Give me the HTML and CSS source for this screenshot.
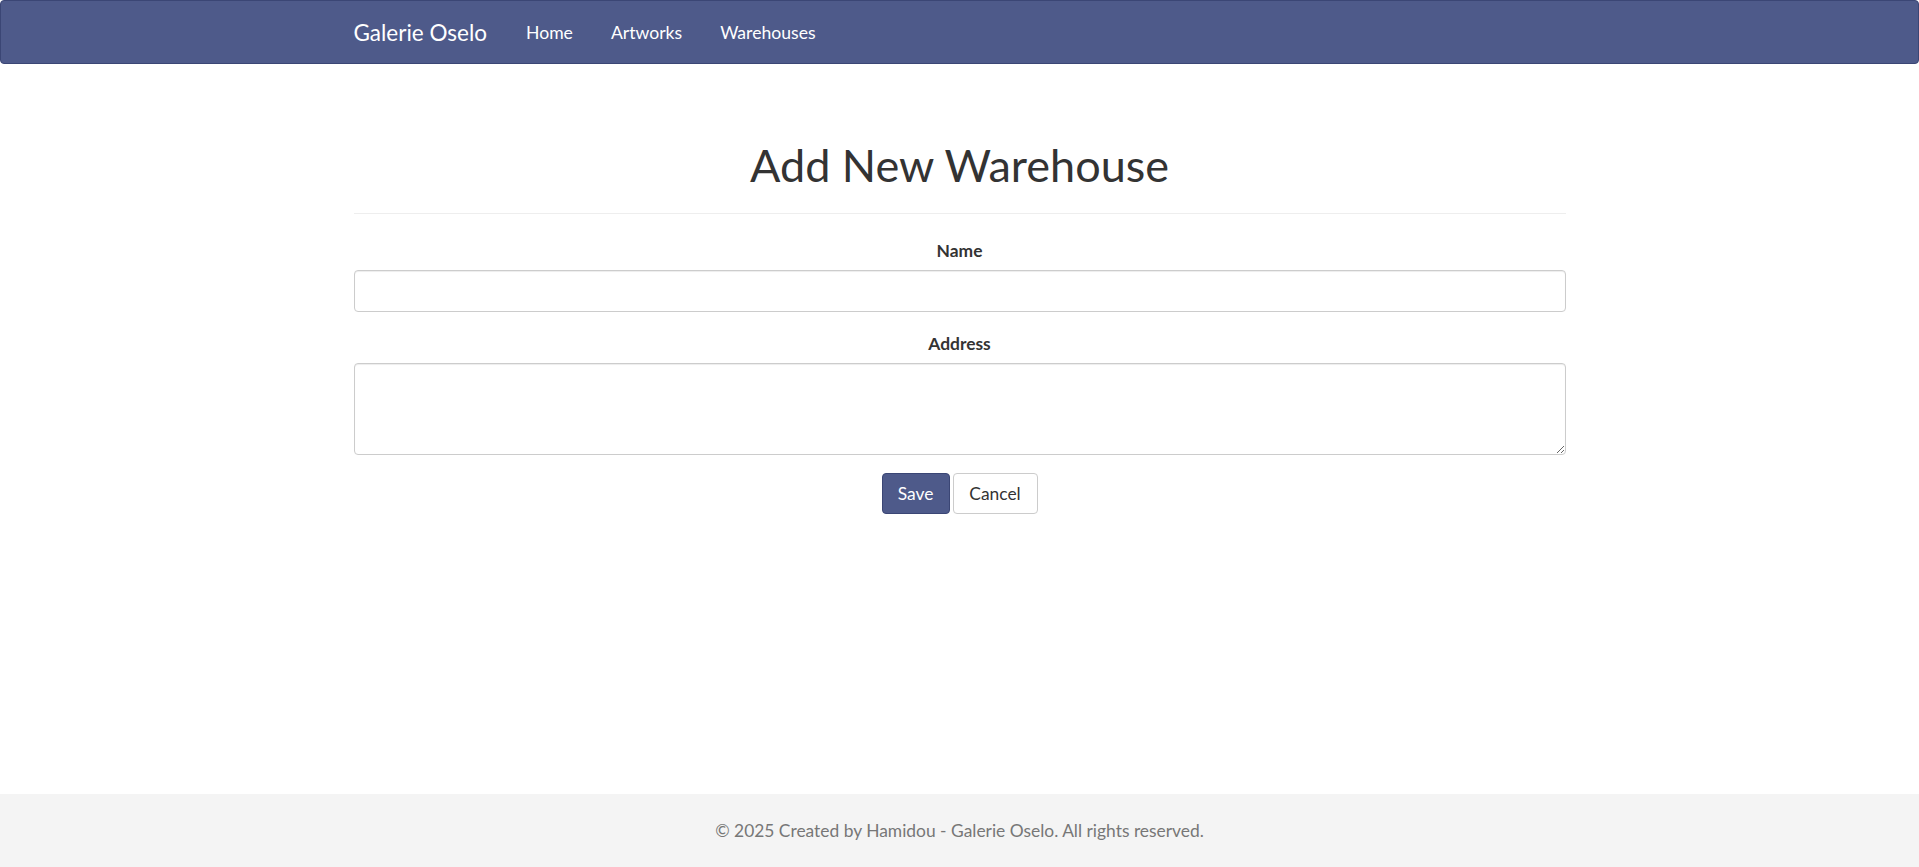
FILE: index.html
```html
<!DOCTYPE html>
<html lang="en">
<head>
<meta charset="utf-8">
<title>Add New Warehouse - Galerie Oselo</title>
<link rel="stylesheet" href="styles.css">
</head>
<body>
<nav class="navbar">
  <div class="container nav-inner">
    <a class="brand" href="#">Galerie Oselo</a>
    <ul class="nav-links">
      <li><a href="#">Home</a></li>
      <li><a href="#">Artworks</a></li>
      <li><a href="#">Warehouses</a></li>
    </ul>
  </div>
</nav>
<main class="container main">
  <div class="page-header">
    <h1>Add New Warehouse</h1>
  </div>
  <form class="form">
    <div class="form-group">
      <label for="name">Name</label>
      <input id="name" type="text" class="form-control">
    </div>
    <div class="form-group">
      <label for="address">Address</label>
      <textarea id="address" class="form-control textarea"></textarea>
    </div>
    <div class="actions">
      <button type="submit" class="btn btn-primary">Save</button>
      <a href="#" class="btn btn-default">Cancel</a>
    </div>
  </form>
</main>
<footer class="footer">
  <p>© 2025 Created by Hamidou - Galerie Oselo. All rights reserved.</p>
</footer>
</body>
</html>
```
FILE: styles.css
```css
* { box-sizing: border-box; }
html, body { height: 100%; }
body {
  margin: 0;
  font-family: Lato, "Open Sans", Arial, sans-serif;
  font-size: 17.4px;
  line-height: 1.5;
  color: #333;
  background: #fff;
  display: flex;
  flex-direction: column;
  min-height: 100vh;
}
.container {
  width: 1212px;
  margin: 0 auto;
}
.navbar {
  background: #4e5a8a;
  border: 1px solid #3b4675;
  border-radius: 4px;
  height: 64px;
  flex-shrink: 0;
}
.nav-inner {
  display: flex;
  align-items: center;
  height: 100%;
  padding-top: 2px;
}
.brand {
  color: #fff;
  text-decoration: none;
  font-size: 22.5px;
  padding-right: 39px;
  line-height: 30px;
}
.nav-links {
  list-style: none;
  margin: 0;
  padding: 0;
  display: flex;
  gap: 38px;
}
.nav-links a {
  color: #fff;
  text-decoration: none;
  font-size: 17.6px;
  line-height: 24px;
}
.main { flex: 1 0 auto; }
.page-header {
  margin-top: 76px;
  padding-bottom: 22px;
  border-bottom: 1px solid #eee;
  text-align: center;
}
.page-header h1 {
  margin: 0;
  font-size: 45px;
  font-weight: 400;
  line-height: 51px;
  color: #333;
}
.form { padding-top: 25px; }
.form-group { margin-bottom: 20px; }
.form-group label {
  display: block;
  text-align: center;
  font-weight: 700;
  font-size: 17.4px;
  line-height: 24px;
  margin-bottom: 7px;
}
.form-control {
  display: block;
  width: 100%;
  height: 42px;
  border: 1px solid #ccc;
  border-radius: 4px;
  box-shadow: inset 0 1px 1px rgba(0,0,0,0.075);
  font: inherit;
  padding: 8px 12px;
  background: #fff;
}
.textarea {
  height: 92px;
  resize: vertical;
}
.form-group:has(.textarea) { margin-bottom: 18px; }
.actions {
  display: flex;
  justify-content: center;
  gap: 3px;
}
.btn {
  display: inline-block;
  font-family: inherit;
  font-size: 17.4px;
  line-height: 24px;
  padding: 8px 0;
  height: 41px;
  border: 1px solid transparent;
  border-radius: 4px;
  text-decoration: none;
  text-align: center;
  cursor: pointer;
}
.btn-primary {
  background: #4e5a8a;
  border-color: #3b4675;
  color: #fff;
  width: 68px;
}
.btn-default {
  background: #fff;
  border-color: #ccc;
  color: #333;
  width: 85px;
}
.footer {
  flex-shrink: 0;
  background: #f4f4f4;
  height: 73px;
  display: flex;
  align-items: center;
  justify-content: center;
}
.footer p {
  margin: 0;
  color: #777;
  font-size: 17.4px;
  line-height: 24px;
}
```
